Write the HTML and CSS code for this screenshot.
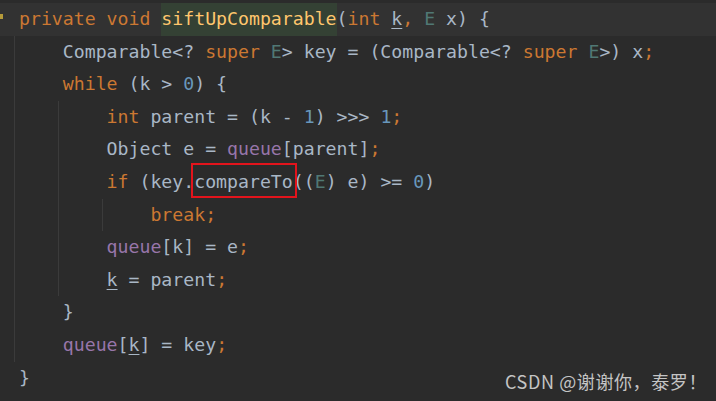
FILE: index.html
```html
<!DOCTYPE html>
<html lang="en">
<head>
<meta charset="utf-8">
<title>siftUpComparable</title>
<link rel="stylesheet" href="styles.css">
</head>
<body>
<div class="editor">
  <span class="gutter-mark"></span>
  <div class="ln cur"><span class="kw">private void </span><span class="decl">siftUpComparable</span>(<span class="kw">int </span><span class="re">k</span><span class="kw">, </span><span class="tp">E</span> x) {</div>
  <div class="ln g1">    Comparable&lt;? <span class="kw">super </span><span class="tp">E</span>&gt; key = (Comparable&lt;? <span class="kw">super </span><span class="tp">E</span>&gt;) x<span class="kw">;</span></div>
  <div class="ln g1">    <span class="kw">while </span>(k &gt; <span class="num">0</span>) {</div>
  <div class="ln g2">        <span class="kw">int </span>parent = (k - <span class="num">1</span>) &gt;&gt;&gt; <span class="num">1</span><span class="kw">;</span></div>
  <div class="ln g2">        Object e = <span class="fld">queue</span>[parent]<span class="kw">;</span></div>
  <div class="ln g2">        <span class="kw">if </span>(key.<span class="mark">compareTo</span>((<span class="tp">E</span>) e) &gt;= <span class="num">0</span>)</div>
  <div class="ln g3">            <span class="kw">break;</span></div>
  <div class="ln g2">        <span class="fld">queue</span>[k] = e<span class="kw">;</span></div>
  <div class="ln g2">        <span class="re">k</span> = parent<span class="kw">;</span></div>
  <div class="ln g1">    }</div>
  <div class="ln g1">    <span class="fld">queue</span>[<span class="re">k</span>] = key<span class="kw">;</span></div>
  <div class="ln">}</div>
  <div class="watermark">CSDN @谢谢你，泰罗！</div>
</div>
</body>
</html>
```

FILE: styles.css
```css
html, body {
  margin: 0;
  padding: 0;
  background: #2b2b2b;
}

.editor {
  position: relative;
  width: 716px;
  height: 401px;
  overflow: hidden;
  padding-top: 3px;
  box-sizing: border-box;
  font-family: "DejaVu Sans Mono", "Liberation Mono", monospace;
  font-size: 18.2px;
  color: #a9b7c6;
}

.ln {
  height: 32.6px;
  line-height: 32.6px;
  padding-left: 19px;
  white-space: pre;
  background-repeat: no-repeat;
}

.cur {
  background-color: #323232;
}

.g1 {
  background-image: linear-gradient(#3b3b3b, #3b3b3b);
  background-size: 1px 100%;
  background-position: 14px 0;
}

.g2 {
  background-image: linear-gradient(#3b3b3b, #3b3b3b), linear-gradient(#3b3b3b, #3b3b3b);
  background-size: 1px 100%, 1px 100%;
  background-position: 14px 0, 58px 0;
}

.g3 {
  background-image: linear-gradient(#3b3b3b, #3b3b3b), linear-gradient(#3b3b3b, #3b3b3b), linear-gradient(#3b3b3b, #3b3b3b);
  background-size: 1px 100%, 1px 100%, 1px 100%;
  background-position: 14px 0, 58px 0, 102px 0;
}

.kw { color: #cc7832; }
.num { color: #6897bb; }
.tp { color: #507874; }
.fld { color: #9876aa; }

.decl {
  display: inline-block;
  color: #ffc66d;
  background: #344134;
}

.re {
  text-decoration: underline;
  text-underline-offset: 3px;
  text-decoration-thickness: 1px;
}

.mark {
  position: relative;
  display: inline-block;
}

.mark::after {
  content: "";
  position: absolute;
  left: -3px;
  right: -4px;
  top: -3px;
  bottom: 1px;
  border: 2px solid #e3141c;
}

.gutter-mark {
  position: absolute;
  left: 0;
  top: 14px;
  width: 3px;
  height: 5px;
  background: #b59a3a;
}

.watermark {
  position: absolute;
  right: 9px;
  bottom: 9px;
  font-family: "Noto Sans CJK SC", "Noto Sans", sans-serif;
  font-size: 18px;
  letter-spacing: 0.6px;
  line-height: 22px;
  color: #c4c4c4;
  white-space: nowrap;
}
```
